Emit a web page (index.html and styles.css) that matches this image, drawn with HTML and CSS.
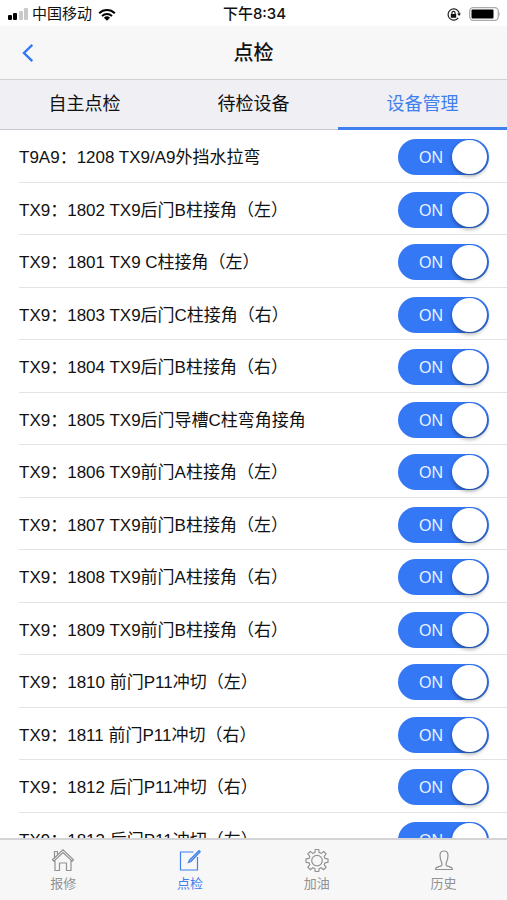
FILE: index.html
```html
<!DOCTYPE html>
<html lang="zh-CN">
<head>
<meta charset="utf-8">
<meta name="viewport" content="width=device-width, initial-scale=1">
<title>点检</title>
<link rel="stylesheet" href="styles.css">
</head>
<body>
<div class="status">
  <div class="status-left">
    <svg class="signal" viewBox="0 0 20 12" aria-hidden="true"><rect x="0" y="7" width="4" height="5" rx="1"/><rect x="5" y="5" width="4" height="7" rx="1"/><rect class="off" x="11" y="3" width="4" height="9" rx="1"/><rect class="off" x="16" y="0" width="4" height="12" rx="1"/></svg>
    <span>中国移动</span>
    <svg class="wifi" viewBox="0 0 18 13" aria-hidden="true"><path d="M1.2 5.2a11.2 11.2 0 0 1 15.6 0M4 8.1a7.2 7.2 0 0 1 10 0"/><path class="dot" d="M9 12.8 5.9 9.8a4.5 4.5 0 0 1 6.2 0z"/></svg>
  </div>
  <time class="clock">下午8:34</time>
  <div class="status-right">
    <svg class="lock" viewBox="0 0 14 13" aria-hidden="true"><path d="M11.200 3.200A5.600 5.600 0 1 0 11.200 9.800M11.200 3.200q1 1.300 1 3"/><path class="fill" d="M10.200 5.600h3.800l-1.900 2.500zM3.800 6h5.400v3.700H3.800z"/><path d="M4.900 6V5a1.600 1.600 0 0 1 3.200 0v1"/></svg>
    <svg class="battery" viewBox="0 0 32 14" aria-hidden="true"><rect class="case" x=".7" y=".7" width="28.6" height="12.6" rx="3.5"/><rect x="2.5" y="2.5" width="22" height="9" rx="1"/><path class="tip" d="M30.4 4.8q1.6 2.2 0 4.4z"/></svg>
  </div>
</div>
<header class="header">
  <button class="back" type="button" aria-label="返回"><svg viewBox="0 0 12 20" aria-hidden="true"><path d="M10.3 1.8 2 10l8.3 8.2"/></svg></button>
  <h1>点检</h1>
</header>
<nav class="tabs">
  <a href="#self">自主点检</a>
  <a href="#pending">待检设备</a>
  <a class="active" href="#devices">设备管理</a>
</nav>
<main class="list">
  <label class="row"><span class="name">T9A9：1208 TX9/A9外挡水拉弯</span><span class="switch"><input type="checkbox" checked><span class="state">ON</span></span></label>
  <label class="row"><span class="name">TX9：1802 TX9后门B柱接角（左）</span><span class="switch"><input type="checkbox" checked><span class="state">ON</span></span></label>
  <label class="row"><span class="name">TX9：1801 TX9 C柱接角（左）</span><span class="switch"><input type="checkbox" checked><span class="state">ON</span></span></label>
  <label class="row"><span class="name">TX9：1803 TX9后门C柱接角（右）</span><span class="switch"><input type="checkbox" checked><span class="state">ON</span></span></label>
  <label class="row"><span class="name">TX9：1804 TX9后门B柱接角（右）</span><span class="switch"><input type="checkbox" checked><span class="state">ON</span></span></label>
  <label class="row"><span class="name">TX9：1805 TX9后门导槽C柱弯角接角</span><span class="switch"><input type="checkbox" checked><span class="state">ON</span></span></label>
  <label class="row"><span class="name">TX9：1806 TX9前门A柱接角（左）</span><span class="switch"><input type="checkbox" checked><span class="state">ON</span></span></label>
  <label class="row"><span class="name">TX9：1807 TX9前门B柱接角（左）</span><span class="switch"><input type="checkbox" checked><span class="state">ON</span></span></label>
  <label class="row"><span class="name">TX9：1808 TX9前门A柱接角（右）</span><span class="switch"><input type="checkbox" checked><span class="state">ON</span></span></label>
  <label class="row"><span class="name">TX9：1809 TX9前门B柱接角（右）</span><span class="switch"><input type="checkbox" checked><span class="state">ON</span></span></label>
  <label class="row"><span class="name">TX9：1810 前门P11冲切（左）</span><span class="switch"><input type="checkbox" checked><span class="state">ON</span></span></label>
  <label class="row"><span class="name">TX9：1811 前门P11冲切（右）</span><span class="switch"><input type="checkbox" checked><span class="state">ON</span></span></label>
  <label class="row"><span class="name">TX9：1812 后门P11冲切（右）</span><span class="switch"><input type="checkbox" checked><span class="state">ON</span></span></label>
  <label class="row"><span class="name">TX9：1813 后门P11冲切（左）</span><span class="switch"><input type="checkbox" checked><span class="state">ON</span></span></label>
</main>
<nav class="bottom">
  <a href="#repair"><svg viewBox="0 0 24 24" aria-hidden="true"><path d="M1.500 11.700 12 1.800l10.500 9.900-1.300 1.400L12 4.500 2.800 13.100zM3.500 9.500V3.500h3V6.700M4 12.500V22.500h4.500v-7.500h7v7.500H20v-10"/></svg><span>报修</span></a>
  <a class="active" href="#check"><svg viewBox="0 0 24 24" aria-hidden="true"><path d="M15.500 4H2.500v18h17V9"/><path class="pen" d="m10.500 14.500 1-2.300L21 2.500l1.200 1.200L13 13.500z"/></svg><span>点检</span></a>
  <a href="#oil"><svg viewBox="0 0 24 24" aria-hidden="true"><path d="M10.300 1.500h3.400l.5 3.100 1.900.8 2.600-1.900 2.400 2.400-1.900 2.600.8 1.900 3 .5v3.400l-3 .5-.8 1.900 1.900 2.500-2.400 2.400-2.600-1.800-1.900.8-.5 3h-3.400l-.5-3-1.900-.8-2.600 1.800-2.400-2.400 1.900-2.500-.8-1.900-3-.5v-3.400l3-.5.8-1.900-1.900-2.600 2.400-2.400 2.600 1.900 1.900-.8z"/><circle cx="12" cy="12.600" r="5.300"/></svg><span>加油</span></a>
  <a href="#history"><svg viewBox="0 0 24 24" aria-hidden="true"><path d="M3.500 21.500c0-2.500 2-2.800 4.500-3.200 2.300-.4 2.300-1.800 1.600-3.800C8.600 12 8 10 8 7.500 8 4.500 9.500 3 12 3s4 1.500 4 4.500c0 2.500-.6 4.500-1.600 7-.7 2-.7 3.400 1.600 3.800 2.500.4 4.500.7 4.500 3.200z"/></svg><span>历史</span></a>
</nav>
</body>
</html>
```

FILE: styles.css
```css
* { box-sizing: border-box; }

body {
  margin: 0;
  height: 100vh;
  display: flex;
  flex-direction: column;
  background: #fff;
  color: #111;
  font-family: "Liberation Sans", "Noto Sans CJK SC", sans-serif;
}

a { color: inherit; text-decoration: none; }

.status {
  flex: none;
  display: grid;
  grid-template-columns: 1fr auto 1fr;
  align-items: center;
  height: 26px;
  padding: 2px 6px 0 8px;
  font-size: 15px;
  line-height: 24px;
}

.status svg { display: block; }
.status-left, .status-right { display: flex; align-items: center; }
.status-left { gap: 4px; }
.status-right { justify-content: flex-end; gap: 8px; }
.signal { width: 20px; height: 12px; }
.signal .off { fill: #c9c9c9; }
.wifi { width: 18px; height: 13px; margin-left: 2px; fill: none; stroke: #000; stroke-width: 2; }
.wifi .dot { fill: #000; stroke: none; }
.clock { font-family: Inter, "Noto Sans CJK SC", sans-serif; font-weight: 500; }
.lock { width: 14px; height: 13px; fill: none; stroke: #222; stroke-width: 1.2; }
.lock .fill { fill: #111; stroke: none; }
.battery { width: 32px; height: 14px; }
.battery .case { fill: #fff; stroke: #aaa; stroke-width: 1.3; }
.battery .tip { fill: #aaa; }

.header {
  flex: none;
  display: grid;
  grid-template-columns: 56px 1fr 56px;
  align-items: center;
  height: 54px;
  background: #f7f7f7;
  border-bottom: 1px solid #d2d2d4;
}

.header h1 {
  margin: 0;
  text-align: center;
  font-size: 20px;
  line-height: 28px;
  font-weight: 500;
}

.back { height: 44px; padding: 0; border: 0; background: none; }
.back svg {
  display: block;
  width: 12px;
  height: 20px;
  margin: 0 auto;
  fill: none;
  stroke: #3478f6;
  stroke-width: 2.4;
}

.tabs {
  flex: none;
  display: flex;
  height: 50px;
  background: #efeff4;
  border-bottom: 1px solid #c8c8cc;
}

.tabs a {
  flex: 1;
  height: 50px;
  font-size: 18px;
  line-height: 48px;
  text-align: center;
}

.tabs .active { color: #3f7fee; border-bottom: 3px solid #3f7fee; }

.list { flex: 1; min-height: 0; overflow: hidden; }

.row {
  display: flex;
  align-items: center;
  justify-content: space-between;
  height: 52px;
  margin-left: 19px;
  padding: 2px 18px 0 0;
  border-bottom: 1px solid #e3e3e5;
}

.row:nth-child(odd) { height: 53px; }
.name { padding-top: 2px; font-size: 17px; line-height: 24px; white-space: nowrap; }

.switch { position: relative; flex: none; width: 91px; height: 36px; }

.switch input {
  appearance: none;
  display: flex;
  justify-content: flex-end;
  width: 100%;
  height: 100%;
  margin: 0;
  padding: 1px 2px 1px 1px;
  border-radius: 18px;
  background: #b8b8bc;
}

.switch input::before {
  content: "";
  width: 35px;
  height: 34px;
  border-radius: 50%;
  background: #fff;
  box-shadow: 0 2px 4px rgba(0, 0, 0, .4);
}

.switch input:checked { background: #3478f6; }
.switch input:not(:checked) { justify-content: flex-start; }
.switch input:not(:checked) + .state { visibility: hidden; }

.state {
  position: absolute;
  inset: 0 auto 0 21px;
  color: #eaf1ff;
  font-size: 16px;
  line-height: 37px;
  pointer-events: none;
}

.bottom {
  flex: none;
  display: flex;
  height: 62px;
  background: #f7f7f7;
  border-top: 2px solid #d4d4d6;
  color: #929292;
}

.bottom a {
  flex: 1;
  display: flex;
  flex-direction: column;
  align-items: center;
  padding-top: 8px;
  font-size: 13px;
  line-height: 24px;
}

.bottom svg {
  width: 24px;
  height: 24px;
  fill: none;
  stroke: currentColor;
  stroke-width: 1.2;
}

.bottom .pen { fill: currentColor; fill-opacity: .5; }
.bottom .active { color: #3f7fee; }
```
